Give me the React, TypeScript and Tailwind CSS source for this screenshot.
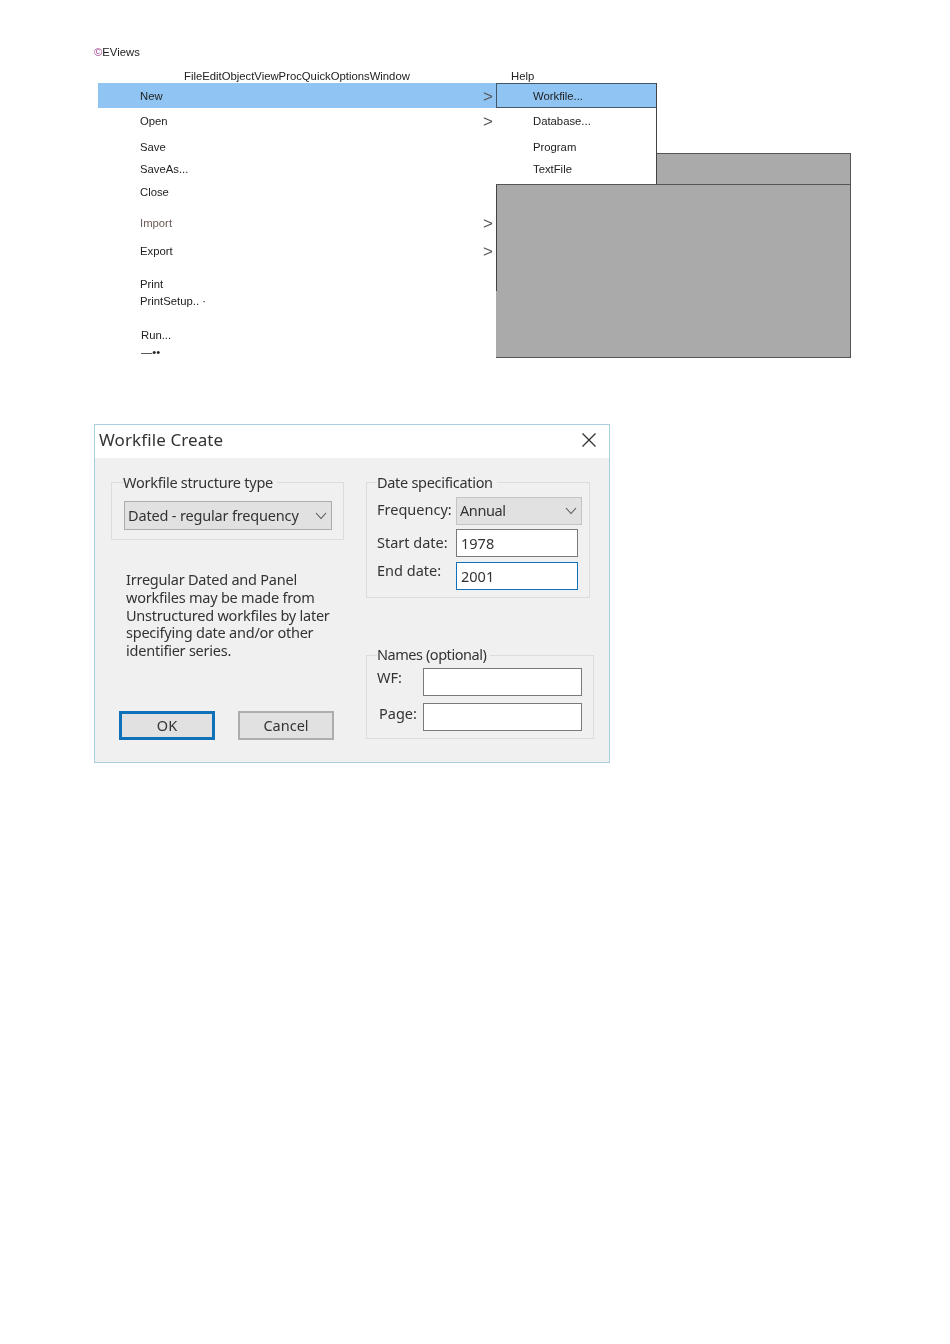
import { ReactNode } from 'react';

const menuRows = [
  { label: 'New', row: 'h-[25px] bg-[#90c5f3] pt-[1px]', arrow: true },
  { label: 'Open', row: 'h-[26px]', arrow: true },
  { label: 'Save', row: 'h-[25px] pt-[1px]' },
  { label: 'SaveAs...', row: 'h-[21px]' },
  { label: 'Close', row: 'h-[24px]' },
  { label: 'Import', row: 'h-[38px] text-[#6b5a55]', arrow: true },
  { label: 'Export', row: 'h-[18px]', arrow: true },
  { label: 'Print', row: 'h-[16px] mt-[16px]' },
  { label: 'PrintSetup.. ·', row: 'h-[18px]' },
  { label: 'Run...', row: 'h-[18px] mt-[16px] pl-[43px]' },
  { label: '—••', row: 'h-[16px] pl-[43px]' },
];

function GroupBox({ title, legend, className, children }: { title: string; legend: string; className: string; children: ReactNode }) {
  return (
    <div className={`relative border border-[#dcdcdc] ${className}`}>
      {/* Legend sits on the border line */}
      <span className={`absolute bg-[#f0f0f0] pr-1 leading-[20px] ${legend}`}>{title}</span>
      {children}
    </div>
  );
}

function Chevron() {
  return (
    <svg width="12" height="8" viewBox="0 0 12 8" fill="none" stroke="#555" strokeWidth="1.1">
      <path d="M1 1 6 6.5 11 1" />
    </svg>
  );
}

export default function App() {
  return (
    <div className="min-h-[1344px] bg-white pt-[45px] font-['Liberation_Sans',sans-serif] text-[11.3px] text-[#222]">
      <div className="blur-[0.25px]">
        <p className="ml-[94px] h-[14px] leading-[14px]">
          <span className="text-[#9b3f8f]">©</span>EViews
        </p>

        {/* Menu bar */}
        <div className="mt-[10px] flex h-[14px] pl-[184px] leading-[14px]">
          <span className="w-[327px]">FileEditObjectViewProcQuickOptionsWindow</span>
          <span>Help</span>
        </div>

        {/* File menu and New submenu */}
        <div className="ml-[98px] flex">
          <div className="w-[398px]">
            {menuRows.map((item) => (
              <div key={item.label} className={`flex items-center justify-between pl-[42px] pr-[3px] ${item.row}`}>
                <span>{item.label}</span>
                {item.arrow && <span className="text-[17px] font-normal leading-none text-[#555]">&gt;</span>}
              </div>
            ))}
          </div>

          <div className="w-[355px]">
            <div className="flex">
              <div className="h-[101px] w-[161px] border-r border-[#444]">
                <div className="flex h-[25px] items-center border border-r-0 border-[#44586a] bg-[#90c5f3] pl-[36px] pt-[1px]">Workfile...</div>
                <div className="flex h-[26px] items-center pl-[37px]">Database...</div>
                <div className="flex h-[25px] items-center pl-[37px] pt-[1px]">Program</div>
                <div className="flex h-[21px] items-center pl-[37px]">TextFile</div>
              </div>
              <div className="mt-[70px] h-[31px] flex-1 border-r border-t border-[#555] bg-[#aaaaaa]" />
            </div>
            <div className="flex h-[174px] border-b border-r border-t border-[#555] bg-[#aaaaaa]">
              <div className="h-[106px] w-px bg-[#444]" />
            </div>
          </div>
        </div>
      </div>

      {/* Workfile Create dialog */}
      <div className="ml-[94px] mt-[64px] h-[339px] w-[516px] border border-[#a9cfe3] bg-[#f0f0f0] font-['Noto_Sans',sans-serif] text-[14.5px] text-[#333] blur-[0.35px]">
        <div className="flex h-[33px] items-center justify-between bg-white pb-[3px] pl-[4px] pr-[12px] text-[17px]">
          <span className="tracking-[0.1px]">Workfile Create</span>
          <svg width="16" height="16" viewBox="0 0 16 16" fill="none" stroke="#333" strokeWidth="1.3">
            <path d="M1.5 1.5 14.5 14.5M14.5 1.5 1.5 14.5" />
          </svg>
        </div>

        <div className="flex pl-[16px] pt-[24px]">
          <div className="w-[233px]">
            <GroupBox title="Workfile structure type" legend="left-[11px] top-[-11px] tracking-[-0.25px]" className="h-[58px] pl-[12px] pt-[18px]">
              <div className="flex h-[29px] w-[208px] items-center justify-between border border-[#adadad] bg-[#e1e1e1] pl-[3px] pr-[4px]">
                <span className="tracking-[-0.17px]">Dated - regular frequency</span>
                <Chevron />
              </div>
            </GroupBox>

            <p className="ml-[15px] mt-[31px] w-[215px] leading-[17.8px] tracking-[-0.23px]">
              Irregular Dated and Panel
              <br />
              workfiles may be made from
              <br />
              Unstructured workfiles by later
              <br />
              specifying date and/or other
              <br />
              identifier series.
            </p>

            <div className="ml-[8px] mt-[51px] flex gap-[23px] text-center">
              <button className="h-[29px] w-[96px] border-[3px] border-[#0f72b8] bg-[#e1e1e1] leading-[20px]">OK</button>
              <button className="h-[29px] w-[96px] border-2 border-[#adadad] bg-[#e1e1e1] leading-[24px]">Cancel</button>
            </div>
          </div>

          <div className="ml-[22px] w-[228px]">
            <GroupBox title="Date specification" legend="left-[10px] top-[-11px] tracking-[-0.3px]" className="h-[116px] w-[224px] pl-[10px] pt-[14px]">
              <div className="flex h-[28px] items-center">
                <span className="w-[79px] pb-[2px]">Frequency:</span>
                <div className="flex h-[28px] w-[126px] items-center justify-between border border-[#c4c4c4] bg-[#e1e1e1] pl-[3px] pr-[4px]">
                  <span className="tracking-[-0.4px]">Annual</span>
                  <Chevron />
                </div>
              </div>
              <div className="mt-[4px] flex h-[28px] items-center">
                <span className="w-[79px]">Start date:</span>
                <div className="h-[28px] w-[122px] border border-[#7a7a7a] bg-white pl-[4px] leading-[26px]">1978</div>
              </div>
              <div className="mt-[5px] flex h-[28px] items-center">
                <span className="w-[79px] pb-[10px]">End date:</span>
                <div className="h-[28px] w-[122px] border border-[#0f72b8] bg-white pl-[4px] leading-[26px]">2001</div>
              </div>
            </GroupBox>

            <GroupBox title="Names (optional)" legend="left-[10px] top-[-12px] tracking-[-0.45px]" className="mt-[57px] h-[84px] pl-[10px] pt-[12px]">
              <div className="flex h-[28px] items-center">
                <span className="w-[46px] pb-[8px]">WF:</span>
                <div className="h-[28px] w-[159px] border border-[#7a7a7a] bg-white" />
              </div>
              <div className="mt-[7px] flex h-[28px] items-center">
                <span className="w-[46px] pb-[6px] pl-[2px]">Page:</span>
                <div className="h-[28px] w-[159px] border border-[#7a7a7a] bg-white" />
              </div>
            </GroupBox>
          </div>
        </div>
      </div>
    </div>
  );
}
